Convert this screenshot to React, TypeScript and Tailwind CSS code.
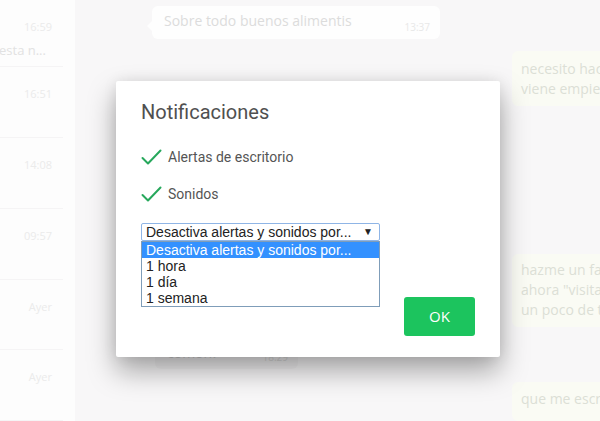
import React from "react";

const CHAT_FONT = { fontFamily: '"Open Sans", "Noto Sans", sans-serif' };

const chats = [
  { time: "16:59", preview: "esta n...", h: "h-[73px]" },
  { time: "16:51", preview: "", h: "h-[77px]" },
  { time: "14:08", preview: "", h: "h-[78px]" },
  { time: "09:57", preview: "", h: "h-[77px]" },
  { time: "Ayer", preview: "", h: "h-[77px]" },
  { time: "Ayer", preview: "", h: "h-[77px]" },
];

function Check() {
  return (
    <svg width="21" height="17" viewBox="0 0 21 17" className="shrink-0">
      <polyline
        points="1.5,9 7,14.5 19.5,1.5"
        fill="none"
        stroke="#27a85c"
        strokeWidth="2"
        strokeLinecap="round"
        strokeLinejoin="round"
      />
    </svg>
  );
}

export default function App() {
  const options = ["1 hora", "1 día", "1 semana"];

  return (
    <div className="relative w-[600px] h-[421px] overflow-hidden flex bg-[#f8f7f8]" style={CHAT_FONT}>
      {/* Chat list (faded) */}
      <aside className="w-[75px] shrink-0 bg-[#fdfdfd] flex flex-col">
        {chats.map((c, i) => (
          <div key={i} className={`${c.h} mr-[12px] border-b border-[#f5f4f5] flex flex-col items-end pt-[20px]`}>
            <span className="text-[11px] leading-[14px] text-[#ebebeb] pr-[11px]">{c.time}</span>
            {c.preview && (
              <span className="self-start -ml-[1px] mt-[8px] text-[13px] leading-[16px] text-[#e2e2e2]">{c.preview}</span>
            )}
          </div>
        ))}
      </aside>

      {/* Conversation (faded) */}
      <main className="flex-1 flex flex-col pt-[6px] text-[14px] leading-[20px] overflow-hidden">
        <div className="relative ml-[77px] w-[288px] h-[34px] bg-[#fefefe] rounded-[6px] pl-[12px] pt-[5px] text-[#dcdcdc]">
          <span className="absolute -left-[5px] top-[14px] w-0 h-0 border-y-[6px] border-y-transparent border-r-[6px] border-r-[#fefefe]" />
          Sobre todo buenos alimentis
          <span className="absolute right-[10px] bottom-[2px] text-[10px] text-[#e8e8e8]">13:37</span>
        </div>

        <div className="ml-[437px] mt-[12px] w-[88px] h-[55px] bg-[#fafbf4] rounded-l-[6px] pl-[9px] pt-[8px] text-[#dcdfd6] whitespace-nowrap overflow-hidden">
          <div>necesito hacer</div>
          <div>viene empiezo</div>
        </div>

        <div className="ml-[437px] mt-[148px] w-[88px] h-[75px] bg-[#fafbf4] rounded-l-[6px] pl-[9px] pt-[6px] text-[#dcdfd6] whitespace-nowrap overflow-hidden">
          <div>hazme un favor</div>
          <div>ahora "visitame"</div>
          <div>un poco de tiempo</div>
        </div>

        <div className="relative ml-[80px] mt-[14px] w-[143px] h-[28px] bg-[#f2f1f2] rounded-[6px] pl-[12px] pt-[2px] text-[#d0d0d0]">
          comon?
          <span className="absolute right-[10px] bottom-[2px] text-[10px] text-[#dadada]">18:29</span>
        </div>

        <div className="ml-[437px] mt-[13px] w-[88px] h-[40px] bg-[#fafbf4] rounded-l-[6px] pl-[9px] pt-[7px] text-[#dcdfd6] whitespace-nowrap overflow-hidden">
          que me escribas
        </div>
      </main>

      {/* Dialog */}
      <div
        className="absolute left-[116px] top-[81px] w-[384px] h-[276px] bg-white rounded-[2px] px-[25px] pt-[19px] flex flex-col shadow-[0_14px_28px_rgba(0,0,0,0.34),0_0_14px_rgba(0,0,0,0.08)]"
        style={{ fontFamily: 'Roboto, "Noto Sans", sans-serif' }}
      >
        <h2 className="text-[20px] leading-[24px] text-[#505050] font-normal">Notificaciones</h2>

        <div className="mt-[21px] h-[24px] flex items-center gap-[6px] text-[14px] text-[#555]">
          <Check />
          <span>Alertas de escritorio</span>
        </div>
        <div className="mt-[13px] h-[24px] flex items-center gap-[6px] text-[14px] text-[#555]">
          <Check />
          <span>Sonidos</span>
        </div>

        {/* Select with its open list */}
        <div className="relative mt-[17px] w-[239px]" style={{ fontFamily: '"Liberation Sans", Arial, sans-serif' }}>
          <div className="h-[18px] border border-[#8fb5e6] rounded-[2px] flex items-center justify-between pl-[4px] pr-[6px] text-[14px] text-[#222]">
            <span className="leading-[16px]">Desactiva alertas y sonidos por...</span>
            <span className="text-[10px] leading-none">▼</span>
          </div>
          <div className="absolute left-0 top-[18px] w-[239px] border border-[#7f9db9] bg-white text-[14px] leading-[16px] text-[#222]">
            <div className="bg-[#3391ff] text-white pl-[4px]">Desactiva alertas y sonidos por...</div>
            {options.map((o) => (
              <div key={o} className="pl-[4px]">{o}</div>
            ))}
          </div>
        </div>

        <div className="mt-auto mb-[21px] self-end">
          <button className="w-[71px] h-[39px] rounded-[3px] bg-[#1cc45e] text-white text-[15px]" style={CHAT_FONT}>
            OK
          </button>
        </div>
      </div>
    </div>
  );
}
